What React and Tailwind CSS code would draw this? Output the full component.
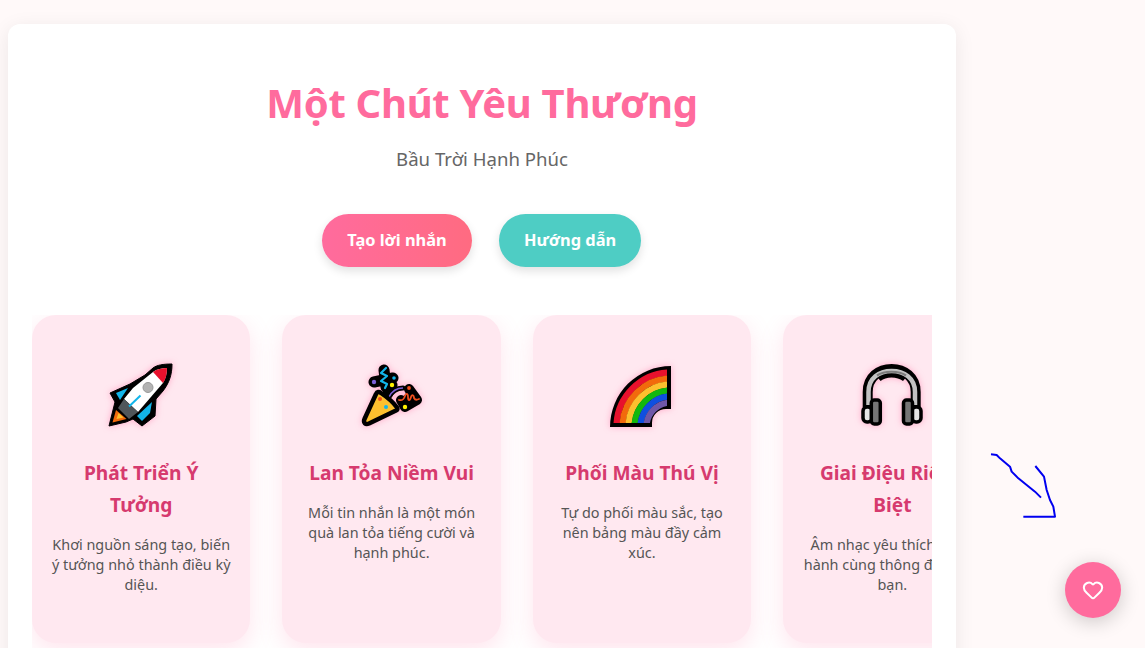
import { Heart } from 'lucide-react';

const RocketIcon = () => (
    <svg width="64" height="64" viewBox="0 0 64 64" className="overflow-visible drop-shadow-[0_0_3px_rgba(255,105,160,0.5)]" fill="none">
        <path d="M63 1 C54 1 48 2 44 5 L36 12 L21 21 L1 30 L6 39 L0 63 L17 59 L24 56 L33 63 L46 53 L47 36 L54 28 C60 20 63 12 63 1 Z" fill="#000" stroke="#000" strokeWidth="1" strokeLinejoin="round" />
        <path d="M7 30 L19 25 L11 37 Z" fill="#12b5ea" />
        <path d="M43 39 L41 50 L33 58 L28 53 Z" fill="#12b5ea" />
        <path d="M24 25 L44 9 C48 6 53 5 58 5 C58 10 57 15 54 20 L29 49 L15 36 Z" fill="#fff" />
        <path d="M44 9 C48 6 53 5 58 5 C58 10 57 16 54 20 Z" fill="#e8112d" />
        <path d="M15 36 L29 49 L20 56 L9 45 Z" fill="#50565a" />
        <path d="M3.5 59.5 L7 47 L17.5 56 Z" fill="#f26a0c" />
        <path d="M7.5 56 L9.5 50 L14.5 54.5 Z" fill="#fcc02e" />
        <circle cx="39" cy="24.5" r="5" fill="#b3b3b3" stroke="#999" strokeWidth="1" />
        <path d="M20 43.5 L31.5 32.5" stroke="#12b5ea" strokeWidth="2" />
    </svg>
);

const PartyIcon = () => (
    <svg width="64" height="64" viewBox="0 0 64 64" className="overflow-visible drop-shadow-[0_0_3px_rgba(255,105,160,0.5)]" fill="none">
        <g stroke="#000" strokeLinecap="round" strokeLinejoin="round">
            <path d="M24 7 L26 24 M14 19 L33 15 M32 22 L28 30" strokeWidth="11" />
            <path d="M49 26 L57 37 L45 44 L41 37" strokeWidth="10" fill="#000" />
            <path d="M29 34 C32 28 37 25 43 25" strokeWidth="5" />
        </g>
        <path d="M26 5 L21 10 L27 13 L21 18 L27 21 L25 25" stroke="#12b5ea" strokeWidth="2.2" strokeLinejoin="round" strokeLinecap="round" />
        <path d="M29 34 C32 28 37 25 43 25" stroke="#7b5fd6" strokeWidth="1.6" />
        <path d="M39 37 C43 38 44 36 45 33 C46 30 48 30 48 34 C48 38 50 38 51 34 C52 31 54 32 54 35 C55 37 57 37 59 36" stroke="#f0501e" strokeWidth="1.8" strokeLinecap="round" />
        <circle cx="14" cy="19" r="2.2" fill="#7b5fd6" />
        <circle cx="34" cy="15" r="1.8" fill="#12b5ea" />
        <circle cx="32" cy="22" r="2.2" fill="#fff200" />
        <circle cx="49" cy="25" r="1.9" fill="#f0501e" />
        <circle cx="45" cy="44" r="2.2" fill="#fff200" />
        <path d="M4.5 56 L16 31 C17 28.5 19 28.5 21 30 C27 34 33 39 37 44.5 C38 46 37 47 36 47.5 L9 60.5 C5.5 62 3 60 4.5 56 Z" fill="#fcc02e" stroke="#000" strokeWidth="4.5" strokeLinejoin="round" />
        <circle cx="20" cy="36" r="2" fill="#f0501e" />
        <circle cx="26" cy="44" r="2" fill="#12b5ea" />
    </svg>
);

const RainbowIcon = () => (
    <svg width="64" height="64" viewBox="0 0 64 64" className="overflow-visible drop-shadow-[0_0_3px_rgba(255,105,160,0.5)]" fill="none">
        <defs>
            <clipPath id="rainbow-clip"><rect x="0" y="0" width="57" height="60" /></clipPath>
        </defs>
        <path d="M0 64 A61 61 0 0 1 61 3 L61 46 L56 46 A14 14 0 0 0 42 60 L42 64 Z" fill="#000" />
        <g clipPath="url(#rainbow-clip)" strokeWidth="6.2">
            <circle cx="61" cy="64" r="54.5" stroke="#e8112d" />
            <circle cx="61" cy="64" r="48.5" stroke="#f26a0c" />
            <circle cx="61" cy="64" r="42.5" stroke="#fcc02e" />
            <circle cx="61" cy="64" r="36.5" stroke="#12b80e" />
            <circle cx="61" cy="64" r="30.5" stroke="#0f4fe0" />
            <circle cx="61" cy="64" r="24.5" stroke="#6f57a8" />
        </g>
    </svg>
);

const HeadphonesIcon = () => (
    <svg width="64" height="64" viewBox="0 0 64 64" className="overflow-visible drop-shadow-[0_0_3px_rgba(255,105,160,0.5)]" fill="none">
        <path d="M7.7 44 V29 C7.7 14 19 6 31.7 6 C44 6 55.7 14 55.7 29 V44" stroke="#000" strokeWidth="10" />
        <path d="M18 15 C25 9 38 9 45.5 15" stroke="#000" strokeWidth="8" />
        <path d="M8.5 42 V29 C8.5 15 19 8 31.7 8 C44 8 55 15 55 29 V42" stroke="#c2c2c2" strokeWidth="4.5" />
        <path d="M17 12.5 C24 7.5 39 7.5 46 12.5" stroke="#7d7d7d" strokeWidth="2.2" />
        <rect x="3" y="44" width="9" height="15" rx="4" fill="#e6e6e6" stroke="#000" strokeWidth="3.5" />
        <rect x="52" y="44" width="9" height="15" rx="4" fill="#e6e6e6" stroke="#000" strokeWidth="3.5" />
        <rect x="11.3" y="37" width="9" height="24" rx="3" fill="#757575" stroke="#000" strokeWidth="3.5" />
        <rect x="43.5" y="37" width="9" height="24" rx="3" fill="#757575" stroke="#000" strokeWidth="3.5" />
    </svg>
);

const features = [
    {
        icon: <RocketIcon />,
        title: 'Phát Triển Ý Tưởng',
        text: 'Khơi nguồn sáng tạo, biến ý tưởng nhỏ thành điều kỳ diệu.',
    },
    {
        icon: <PartyIcon />,
        title: 'Lan Tỏa Niềm Vui',
        text: 'Mỗi tin nhắn là một món quà lan tỏa tiếng cười và hạnh phúc.',
    },
    {
        icon: <RainbowIcon />,
        title: 'Phối Màu Thú Vị',
        text: 'Tự do phối màu sắc, tạo nên bảng màu đầy cảm xúc.',
    },
    {
        icon: <HeadphonesIcon />,
        title: 'Giai Điệu Riêng Biệt',
        text: 'Âm nhạc yêu thích đồng hành cùng thông điệp của bạn.',
    },
];

const FeatureCard = ({ icon, title, text }) => (
    <div className="w-[218.4px] h-[328px] shrink-0 rounded-[24px] bg-[#ffe8f0] px-[19px] pt-[48px] text-center shadow-[0_8px_24px_rgba(255,107,157,0.18)]">
        <div className="flex justify-center h-[66px]">{icon}</div>
        <h3 className="mt-[28px] px-[4px] text-[19.2px] leading-[32px] font-bold text-[#d63a6e]">{title}</h3>
        <p className="mt-[14px] text-[14.4px] leading-[20px] text-[#555]">{text}</p>
    </div>
);

export default function App() {
    return (
        <div className="relative h-screen overflow-hidden bg-[#fff9f9] pl-2 pt-6 font-['Noto_Sans','Open_Sans',sans-serif]">
            <main className="w-[948px] h-[700px] rounded-[12px] bg-white px-6 pt-[50px] shadow-[0_4px_20px_rgba(0,0,0,0.08)]">
                <header className="text-center">
                    <h1 className="text-[40px] tracking-[-0.3px] leading-[58px] font-bold text-[#ff6b9d]">Một Chút Yêu Thương</h1>
                    <p className="mt-[14px] text-[18.6px] leading-[26px] text-[#666]">Bầu Trời Hạnh Phúc</p>
                </header>

                <div className="mt-[42px] flex justify-center gap-[27px] pr-[1px]">
                    <button className="w-[150px] h-[53px] rounded-full bg-gradient-to-r from-[#ff6b9d] to-[#ff6b81] text-[16.4px] font-bold text-white shadow-[0_4px_10px_rgba(0,0,0,0.12)]">
                        Tạo lời nhắn
                    </button>
                    <button className="w-[142px] h-[53px] rounded-full bg-[#4ecdc4] text-[16.4px] font-bold text-white shadow-[0_4px_10px_rgba(0,0,0,0.12)]">
                        Hướng dẫn
                    </button>
                </div>

                <div className="mt-[48px] flex gap-[32px] overflow-hidden pb-10">
                    {features.map((f) => (
                        <FeatureCard key={f.title} {...f} />
                    ))}
                </div>
            </main>

            {/* hand drawn arrow on top of the page */}
            <svg className="absolute left-[970px] top-[440px]" width="175" height="208" viewBox="0 0 525 624" fill="none" stroke="#0000f0" strokeWidth="6" strokeLinejoin="round">
                <path d="M63 43 L80 45 L90 55 L120 80 L125 95 L145 115 L170 135 L195 155 L213 173" />
                <path d="M196 78 L222 110 L230 150 L240 180 L250 200 L255 230 L160 230" />
            </svg>

            <button className="absolute left-[1065px] top-[562px] flex h-14 w-14 items-center justify-center rounded-full bg-[#ff6b9d] text-white shadow-[0_4px_20px_rgba(0,0,0,0.2)]">
                <Heart size={22} strokeWidth={2.2} />
            </button>
        </div>
    );
}
